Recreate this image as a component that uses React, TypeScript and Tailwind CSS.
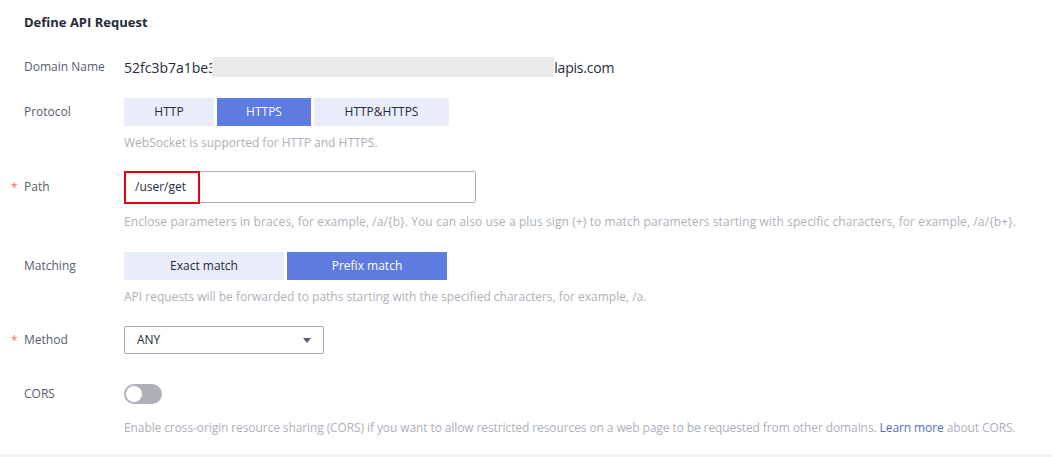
import React from 'react';

const font = { fontFamily: '"Open Sans", "Noto Sans", sans-serif' };

function Label({ text, required }: { text: string; required?: boolean }) {
  return (
    <div className="w-[124px] shrink-0 pl-[24px] relative text-[12px] text-[#575d6c]">
      {required && <span className="absolute left-[11px] top-[1px] text-[#f66f6a]">*</span>}
      {text}
    </div>
  );
}

function Help({ children, mt = 'mt-[8px]' }: { children: React.ReactNode; mt?: string }) {
  return <div className={'pl-[124px] text-[12px] text-[#adb0b8] leading-[18px] ' + mt}>{children}</div>;
}

function Seg({ items, active, widths }: { items: string[]; active: number; widths: string[] }) {
  return (
    <div className="flex gap-[3px]">
      {items.map((it, i) => (
        <div
          key={it}
          className={
            'h-[28px] flex items-center justify-center text-[12px] ' +
            widths[i] +
            (i === active ? ' bg-[#5e7ce0] text-white' : ' bg-[#e9edfa] text-[#252b3a]')
          }
        >
          {it}
        </div>
      ))}
    </div>
  );
}

export default function App() {
  return (
    <div className="w-[1052px] h-[457px] bg-white relative overflow-hidden" style={font}>
      <div className="pl-[24px] pt-[12px] text-[13px] font-bold text-[#252b3a] leading-[20px]">Define API Request</div>

      {/* Domain */}
      <div className="flex items-center mt-[24px] h-[22px]">
        <Label text="Domain Name" />
        <div className="flex items-center text-[14px] text-[#252b3a]">
          <span>52fc3b7a1be3</span>
          <span className="w-[342px] h-[20px] bg-[#ebebec] -ml-[4px]" />
          <span className="tracking-[-0.2px]">lapis.com</span>
        </div>
      </div>

      {/* Protocol */}
      <div className="flex items-center mt-[20px]">
        <Label text="Protocol" />
        <Seg items={['HTTP', 'HTTPS', 'HTTP&HTTPS']} active={1} widths={['w-[90px]', 'w-[94px]', 'w-[135px]']} />
      </div>
      <Help>WebSocket is supported for HTTP and HTTPS.</Help>

      {/* Path */}
      <div className="flex items-center mt-[19px]">
        <Label text="Path" required />
        <div className="relative w-[352px] h-[32px] border border-[#adb0b8] rounded-[2px] flex items-center pl-[10px] text-[12px] text-[#252b3a]">
          /user/get
          <div className="absolute -left-[1px] -top-[1px] w-[76px] h-[33px] border-2 border-[#e60012]" />
        </div>
      </div>
      <Help mt="mt-[10px]">
        <span className="tracking-[0.1px]">
          Enclose parameters in braces, for example, /a/{'{b}'}. You can also use a plus sign (+) to match parameters starting with specific characters, for example, /a/{'{b+}'}.
        </span>
      </Help>

      {/* Matching */}
      <div className="flex items-center mt-[21px]">
        <Label text="Matching" />
        <Seg items={['Exact match', 'Prefix match']} active={1} widths={['w-[160px]', 'w-[160px]']} />
      </div>
      <Help>API requests will be forwarded to paths starting with the specified characters, for example, /a.</Help>

      {/* Method */}
      <div className="flex items-center mt-[20px]">
        <Label text="Method" required />
        <div className="w-[200px] h-[28px] border border-[#adb0b8] rounded-[2px] flex items-center justify-between pl-[12px] pr-[12px] text-[12px] text-[#252b3a]">
          ANY
          <svg width="8" height="5" viewBox="0 0 8 5">
            <path d="M0 0 H8 L4 5 Z" fill="#575d6c" />
          </svg>
        </div>
      </div>

      {/* CORS */}
      <div className="flex items-center mt-[30px]">
        <Label text="CORS" />
        <div className="w-[38px] h-[20px] rounded-full bg-[#adb0b8] relative">
          <div className="absolute left-[2px] top-[2px] w-[16px] h-[16px] rounded-full bg-white" />
        </div>
      </div>
      <Help mt="mt-[15px]">
        <span className="tracking-[-0.1px]">
          Enable cross-origin resource sharing (CORS) if you want to allow restricted resources on a web page to be requested from other domains.{' '}
          <span className="text-[#526ecc]">Learn more</span> about CORS.
        </span>
      </Help>

      <div className="absolute left-0 bottom-0 w-full h-[3px] bg-[#f3f3f5]" />
    </div>
  );
}
